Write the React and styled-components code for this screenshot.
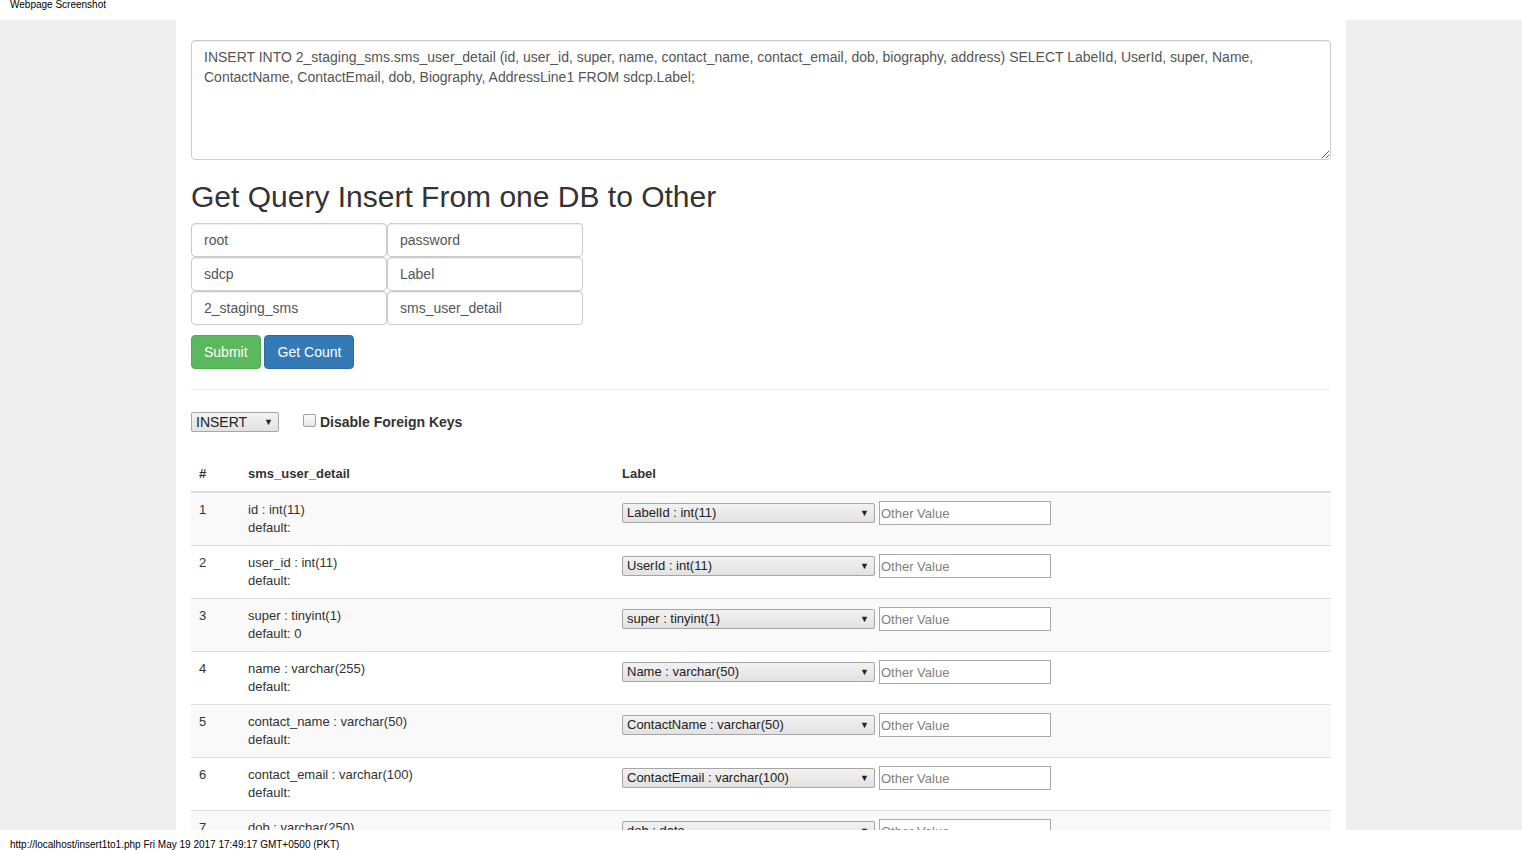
import styled, { createGlobalStyle } from "styled-components";

const GlobalStyle = createGlobalStyle`
  html, body {
    margin: 0;
    padding: 0;
    background: #fff;
  }
  * {
    box-sizing: border-box;
  }
`;

const Frame = styled.div`
  width: 1522px;
  height: 850px;
  overflow: hidden;
  font-family: "Liberation Sans", Arial, sans-serif;
  color: #333;
`;

const Caption = styled.div`
  height: 20px;
  padding: 0 10px;
  font-size: 10px;
  line-height: 10px;
  color: #000;
`;

const Footer = styled.div`
  height: 20px;
  padding: 10px 10px 0;
  font-size: 10px;
  line-height: 10px;
  color: #000;
`;

const Viewport = styled.div`
  height: 810px;
  overflow: hidden;
  background: #efefef;
`;

const Container = styled.div`
  width: 1170px;
  min-height: 100%;
  margin: 0 auto;
  padding: 20px 15px 0;
  background: #fff;
`;

const QueryBox = styled.textarea`
  display: block;
  width: 100%;
  height: 120px;
  padding: 6px 12px;
  border: 1px solid #ccc;
  border-radius: 4px;
  box-shadow: inset 0 1px 1px rgba(0, 0, 0, 0.075);
  font-family: "Liberation Sans", Arial, sans-serif;
  font-size: 14px;
  line-height: 20px;
  color: #555;
  resize: vertical;
  outline: none;
`;

const Heading = styled.h2`
  margin: 20px 0 10px;
  font-size: 30px;
  font-weight: 500;
  line-height: 33px;
  color: #333;
`;

const Fields = styled.div`
  display: grid;
  grid-template-columns: 196px 196px;
`;

const Field = styled.input`
  height: 34px;
  padding: 6px 12px;
  border: 1px solid #ccc;
  border-radius: 4px;
  box-shadow: inset 0 1px 1px rgba(0, 0, 0, 0.075);
  font-family: "Liberation Sans", Arial, sans-serif;
  font-size: 14px;
  color: #555;
  outline: none;
`;

const Actions = styled.div`
  display: flex;
  gap: 3px;
  margin-top: 10px;
`;

const Button = styled.button`
  height: 34px;
  padding: ${(p) => (p.$kind === "success" ? "6px 12px" : "6px 12px 6px 13px")};
  border: 1px solid ${(p) => (p.$kind === "success" ? "#4cae4c" : "#2e6da4")};
  border-radius: 4px;
  background: ${(p) => (p.$kind === "success" ? "#5cb85c" : "#337ab7")};
  color: #fff;
  font-family: "Liberation Sans", Arial, sans-serif;
  font-size: 14px;
  line-height: 20px;
  cursor: pointer;
`;

const Rule = styled.hr`
  margin: 20px 0;
  border: 0;
  border-top: 1px solid #eee;
`;

const Toolbar = styled.div`
  display: flex;
  align-items: center;
  height: 24px;
  margin-bottom: 23px;
`;

const FakeSelect = styled.div`
  display: flex;
  align-items: center;
  justify-content: space-between;
  width: ${(p) => p.$width}px;
  height: 20px;
  padding: 0 5px 0 4px;
  border: 1px solid #a6a6a6;
  border-radius: 2px;
  background: linear-gradient(#f2f2f2, #e2e2e2);
  font-size: ${(p) => p.$size}px;
  color: #222;
  white-space: nowrap;

  &::after {
    content: "▼";
    font-size: 9px;
    color: #222;
  }
`;

const CheckLabel = styled.label`
  display: flex;
  align-items: center;
  margin-left: 24px;
  font-size: 14px;
  font-weight: bold;
  color: #333;
`;

const Box = styled.span`
  width: 13px;
  height: 13px;
  margin: -4px 4px 0 0;
  border: 1px solid #a0a0a0;
  border-radius: 2px;
  background: linear-gradient(#fcfcfc, #e6e6e6);
`;

const Table = styled.table`
  width: 100%;
  border-collapse: collapse;
  border-spacing: 0;
  font-size: 13px;
  line-height: 18px;
  color: #333;
`;

const Th = styled.th`
  padding: 8px;
  width: ${(p) => p.$width || "auto"};
  text-align: left;
  font-weight: bold;
  border-bottom: 2px solid #ddd;
`;

const Row = styled.tr`
  background: ${(p) => (p.$odd ? "#f9f9f9" : "#fff")};
`;

const Td = styled.td`
  padding: 8px;
  vertical-align: top;
  border-top: 1px solid #ddd;
`;

const Mapping = styled.div`
  display: flex;
  align-items: center;
  gap: 4px;
`;

const OtherValue = styled.input`
  width: 172px;
  height: 24px;
  padding: 1px 1px;
  border: 1px solid #a9a9a9;
  font-family: "Liberation Sans", Arial, sans-serif;
  font-size: 13px;
  color: #333;
  outline: none;

  &::placeholder {
    color: #808080;
  }
`;

const query =
  "INSERT INTO 2_staging_sms.sms_user_detail (id, user_id, super, name, contact_name, contact_email, dob, biography, address) SELECT LabelId, UserId, super, Name, ContactName, ContactEmail, dob, Biography, AddressLine1 FROM sdcp.Label;";

const columns = [
  { col: "id : int(11)", def: "", src: "LabelId : int(11)" },
  { col: "user_id : int(11)", def: "", src: "UserId : int(11)" },
  { col: "super : tinyint(1)", def: "0", src: "super : tinyint(1)" },
  { col: "name : varchar(255)", def: "", src: "Name : varchar(50)" },
  { col: "contact_name : varchar(50)", def: "", src: "ContactName : varchar(50)" },
  { col: "contact_email : varchar(100)", def: "", src: "ContactEmail : varchar(100)" },
  { col: "dob : varchar(250)", def: "", src: "dob : date" },
  { col: "biography : text", def: "", src: "Biography : text" },
  { col: "address : varchar(255)", def: "", src: "AddressLine1 : varchar(255)" },
];

const App = () => {
  return (
    <Frame>
      <GlobalStyle />
      <Caption>Webpage Screenshot</Caption>
      <Viewport>
        <Container>
          <QueryBox readOnly defaultValue={query} />
          <Heading>Get Query Insert From one DB to Other</Heading>
          <Fields>
            <Field defaultValue="root" />
            <Field defaultValue="password" />
            <Field defaultValue="sdcp" />
            <Field defaultValue="Label" />
            <Field defaultValue="2_staging_sms" />
            <Field defaultValue="sms_user_detail" />
          </Fields>
          <Actions>
            <Button $kind="success">Submit</Button>
            <Button $kind="primary">Get Count</Button>
          </Actions>
          <Rule />
          <Toolbar>
            <FakeSelect $width={88} $size={14}>INSERT</FakeSelect>
            <CheckLabel>
              <Box />
              Disable Foreign Keys
            </CheckLabel>
          </Toolbar>
          <Table>
            <thead>
              <tr>
                <Th $width="49px">#</Th>
                <Th $width="374px">sms_user_detail</Th>
                <Th>Label</Th>
              </tr>
            </thead>
            <tbody>
              {columns.map((c, i) => (
                <Row key={c.col} $odd={i % 2 === 0}>
                  <Td>{i + 1}</Td>
                  <Td>
                    {c.col}
                    <br />
                    default: {c.def}
                  </Td>
                  <Td>
                    <Mapping>
                      <FakeSelect $width={253} $size={13}>{c.src}</FakeSelect>
                      <OtherValue placeholder="Other Value" />
                    </Mapping>
                  </Td>
                </Row>
              ))}
            </tbody>
          </Table>
        </Container>
      </Viewport>
      <Footer>http://localhost/insert1to1.php Fri May 19 2017 17:49:17 GMT+0500 (PKT)</Footer>
    </Frame>
  );
};

export default App;
